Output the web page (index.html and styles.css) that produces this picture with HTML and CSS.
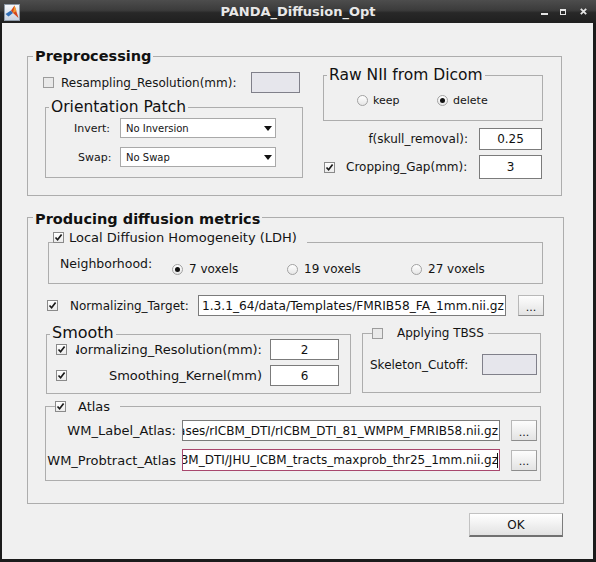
FILE: index.html
```html
<!DOCTYPE html>
<html>
<head>
<meta charset="utf-8">
<title>PANDA_Diffusion_Opt</title>
<link rel="stylesheet" href="styles.css">
</head>
<body>
<div class="window">
  <div class="titlebar">
    <div class="tb-left">
      <div class="appicon">
        <svg width="14" height="14" viewBox="0 0 14 14">
          <polygon points="0.5,9 6,5.5 8,8 3.5,11.5" fill="#2f6db5"/>
          <polygon points="6,5.5 9.5,0.5 13.5,13 8,8" fill="#d4461b"/>
          <polygon points="9.5,0.5 11.5,6 8,8" fill="#f29a2e"/>
        </svg>
      </div>
    </div>
    <div class="wtitle">PANDA_Diffusion_Opt</div>
    <div class="wctrls">
      <span class="wc-min"></span>
      <span class="wc-max"></span>
      <svg class="wc-close" width="7" height="7" viewBox="0 0 7 7"><path d="M0.8 0.8 L6.2 6.2 M6.2 0.8 L0.8 6.2" stroke="#e4e4e4" stroke-width="1.8"/></svg>
    </div>
  </div>

  <div class="client">
    <div class="group g-pre">
      <div class="gtitle bold">Preprocessing</div>
      <div class="pre-body">
        <div class="pre-left">
          <div class="row resamp-row">
            <span class="cb disabled"></span>
            <span class="lbl resamp-lbl">Resampling_Resolution(mm):</span>
            <span class="edit disabled resamp-edit"></span>
          </div>
          <div class="group g-orient">
            <div class="gtitle reg">Orientation Patch</div>
            <div class="row pop-row invert-row">
              <span class="plbl invert-lbl">Invert:</span>
              <div class="popup"><span>No Inversion</span><i class="arrow"></i></div>
            </div>
            <div class="row pop-row swap-row">
              <span class="plbl swap-lbl">Swap:</span>
              <div class="popup"><span>No Swap</span><i class="arrow"></i></div>
            </div>
          </div>
        </div>
        <div class="pre-right">
          <div class="group g-raw">
            <div class="gtitle reg raw-title">Raw NII from Dicom</div>
            <div class="row raw-radios">
              <span class="ritem keep-item"><span class="radio"></span><span>keep</span></span>
              <span class="ritem"><span class="radio on"></span><span>delete</span></span>
            </div>
          </div>
          <div class="row f-row">
            <span class="lbl f-lbl">f(skull_removal):</span>
            <span class="edit num f-edit">0.25</span>
          </div>
          <div class="row c-row">
            <span class="cb on c-cb"><svg width="9" height="9" viewBox="0 0 9 9"><path d="M1.5 4.5 L3.6 6.8 L7.6 1.6" fill="none" stroke="#1a1a1a" stroke-width="1.7"/></svg></span>
            <span class="lbl c-lbl">Cropping_Gap(mm):</span>
            <span class="edit num c-edit">3</span>
          </div>
        </div>
      </div>
    </div>

    <div class="group g-prod">
      <div class="gtitle bold prod-title">Producing diffusion metrics</div>
      <div class="group g-ldh">
        <div class="ctitle ldh-title">
          <span class="cb on"><svg width="9" height="9" viewBox="0 0 9 9"><path d="M1.5 4.5 L3.6 6.8 L7.6 1.6" fill="none" stroke="#1a1a1a" stroke-width="1.7"/></svg></span>
          <span>Local Diffusion Homogeneity (LDH)</span>
        </div>
        <div class="row nb-row">
          <span class="nb-lbl">Neighborhood:</span>
          <span class="ritem vox vox7"><span class="radio on"></span><span>7 voxels</span></span>
          <span class="ritem vox vox19"><span class="radio"></span><span>19 voxels</span></span>
          <span class="ritem vox"><span class="radio"></span><span>27 voxels</span></span>
        </div>
      </div>
      <div class="row nt-row">
        <span class="cb on"><svg width="9" height="9" viewBox="0 0 9 9"><path d="M1.5 4.5 L3.6 6.8 L7.6 1.6" fill="none" stroke="#1a1a1a" stroke-width="1.7"/></svg></span>
        <span class="lbl nt-lbl">Normalizing_Target:</span>
        <span class="edit path nt-edit"><span>1.3.1_64/data/Templates/FMRIB58_FA_1mm.nii.gz</span></span>
        <span class="btn3 nt-btn">...</span>
      </div>
      <div class="row sm-row">
        <div class="group g-smooth">
          <div class="gtitle reg smooth-title">Smooth</div>
          <div class="row s-row s-row1">
            <span class="cb on"><svg width="9" height="9" viewBox="0 0 9 9"><path d="M1.5 4.5 L3.6 6.8 L7.6 1.6" fill="none" stroke="#1a1a1a" stroke-width="1.7"/></svg></span>
            <span class="clip-lbl"><span>Normalizing_Resolution(mm):</span></span>
            <span class="edit num s-edit">2</span>
          </div>
          <div class="row s-row s-row2">
            <span class="cb on"><svg width="9" height="9" viewBox="0 0 9 9"><path d="M1.5 4.5 L3.6 6.8 L7.6 1.6" fill="none" stroke="#1a1a1a" stroke-width="1.7"/></svg></span>
            <span class="clip-lbl"><span>Smoothing_Kernel(mm)</span></span>
            <span class="edit num s-edit">6</span>
          </div>
        </div>
        <div class="group g-tbss">
          <div class="ctitle tbss-title">
            <span class="cb disabled"></span>
            <span>Applying TBSS</span>
          </div>
          <div class="row skel-row">
            <span class="lbl skel-lbl">Skeleton_Cutoff:</span>
            <span class="edit disabled skel-edit"></span>
          </div>
        </div>
      </div>
      <div class="group g-atlas">
        <div class="ctitle atlas-title">
          <span class="cb on"><svg width="9" height="9" viewBox="0 0 9 9"><path d="M1.5 4.5 L3.6 6.8 L7.6 1.6" fill="none" stroke="#1a1a1a" stroke-width="1.7"/></svg></span>
          <span>Atlas</span>
        </div>
        <div class="row a-row a-row1">
          <span class="lbl a-lbl">WM_Label_Atlas:</span>
          <span class="edit path a-edit"><span>ases/rICBM_DTI/rICBM_DTI_81_WMPM_FMRIB58.nii.gz</span></span>
          <span class="btn3 a-btn">...</span>
        </div>
        <div class="row a-row a-row2">
          <span class="lbl a-lbl">WM_Probtract_Atlas</span>
          <span class="edit path a-edit focus"><span>3M_DTI/JHU_ICBM_tracts_maxprob_thr25_1mm.nii.gz</span><i class="caret"></i></span>
          <span class="btn3 a-btn">...</span>
        </div>
      </div>
    </div>

    <div class="okbtn">OK</div>
  </div>
</div>
</body>
</html>
```
FILE: styles.css
```css
* { box-sizing: border-box; }
html, body { margin: 0; padding: 0; }
body {
  width: 596px; height: 562px; overflow: hidden;
  background: #1b1b1b;
  font-family: "DejaVu Sans", "Liberation Sans", sans-serif;
  font-size: 12px; color: #141414;
}
.window { width: 596px; height: 562px; background: #1b1b1b; display: flex; flex-direction: column; }

/* title bar */
.titlebar {
  height: 23px; flex: none;
  display: grid; grid-template-columns: 1fr auto 1fr; align-items: center;
  background: linear-gradient(#4d4d4d 0, #3b3b3b 45%, #282828 55%, #1f1f1f 100%);
  color: #e8e8e8;
}
.tb-left { display: flex; align-items: center; padding-left: 4px; }
.appicon {
  width: 16px; height: 17px; border: 1px solid #8e9aa8;
  background: linear-gradient(#f6f8fb, #c9d3e0);
  display: flex; align-items: center; justify-content: center;
  margin-top: 1px;
}
.wtitle { font-weight: bold; font-size: 13px; line-height: 23px; white-space: nowrap; }
.wctrls { justify-self: end; display: flex; align-items: center; padding-right: 9px; height: 23px; }
.wc-min { width: 7px; height: 2px; background: #e4e4e4; margin-top: 5px; }
.wc-max { width: 6px; height: 6px; border: 1px solid #e4e4e4; border-top-width: 2px; margin-left: 12px; }
.wc-close { margin-left: 14px; }

/* client */
.client {
  margin: 0 3px 0 2px; height: 536px; flex: none;
  background: #f0f0f0;
  display: flex; flex-direction: column; align-items: flex-start;
}

.group {
  border: 1px solid #adadad; flex: none;
  display: flex; flex-direction: column; align-items: flex-start;
}
.gtitle { background: #f0f0f0; padding: 0 2px; white-space: nowrap; color: #111; }
.gtitle.bold { font-weight: bold; font-size: 14.5px; line-height: 18px; margin-top: -10px; margin-bottom: -9px; margin-left: 5px; }
.gtitle.reg { font-size: 15.5px; line-height: 20px; margin-top: -11px; margin-bottom: -10px; margin-left: 3px; }

.row { display: flex; align-items: center; flex: none; }
.lbl { white-space: nowrap; flex: none; }

.cb {
  width: 11px; height: 11px; flex: none;
  border: 1px solid #8a8a8a;
  background: linear-gradient(#ffffff, #ebebeb);
  display: flex; align-items: center; justify-content: center;
}
.cb.disabled { border-color: #9c9c9c; background: #e9e9e9; }

.radio {
  width: 11px; height: 11px; border-radius: 50%; flex: none;
  border: 1px solid #a2a2a2;
  background: linear-gradient(#ffffff, #e6e6e6);
  display: flex; align-items: center; justify-content: center;
}
.radio.on::after { content: ""; width: 5px; height: 5px; border-radius: 50%; background: #111; }
.ritem { display: flex; align-items: center; gap: 5px; white-space: nowrap; }

.edit {
  background: #fff; border: 1px solid #7b7b7b;
  display: flex; align-items: center; overflow: hidden; white-space: nowrap;
  font-size: 12px; flex: none; color: #111;
}
.edit.num { justify-content: center; }
.edit.path { justify-content: flex-end; padding-right: 1px; }
.edit.path > span { flex: none; }
.edit.disabled { background: #e6e6ec; border-color: #80808a; }
.edit.focus { border-color: #a8476d; }
.caret { width: 1px; height: 15px; background: #111; flex: none; margin-left: -1px; }

.popup {
  width: 156px; height: 20px; background: #fff; border: 1px solid #a9a9a9;
  display: flex; align-items: center; justify-content: space-between;
  padding: 0 2px 0 5px; font-size: 10px; white-space: nowrap;
}
.arrow { width: 0; height: 0; border-left: 4px solid transparent; border-right: 4px solid transparent; border-top: 5px solid #111; margin-right: 1px; }

.btn3 {
  width: 26px; height: 21px; flex: none;
  border: 1px solid #b8b8b8; border-bottom-color: #8c8c8c; border-right-color: #9c9c9c;
  background: linear-gradient(#fdfdfd, #e3e3e3);
  display: flex; align-items: center; justify-content: center;
  font-size: 11px; padding-top: 3px;
}

/* Preprocessing */
.g-pre { margin-top: 33px; margin-left: 25px; width: 535px; height: 140px; }
.pre-body { display: flex; align-items: flex-start; margin-left: 15px; }
.pre-left { width: 260px; display: flex; flex-direction: column; align-items: flex-start; flex: none; }
.resamp-row { margin-top: 16px; height: 21px; }
.resamp-lbl { margin-left: 7px; width: 190px; }
.resamp-edit { width: 49px; height: 21px; }

.g-orient { margin-top: 14px; margin-left: 2px; width: 258px; height: 71px; }
.pop-row { height: 20px; }
.invert-row { margin-top: 11px; }
.swap-row { margin-top: 9px; }
.plbl { width: 74px; font-size: 11px; white-space: nowrap; }
.invert-lbl { padding-left: 28px; }
.swap-lbl { padding-left: 32px; }

.pre-right { margin-left: 20px; width: 220px; display: flex; flex-direction: column; align-items: flex-start; flex: none; }
.g-raw { margin-top: 19px; width: 220px; height: 46px; }
.raw-title { font-size: 16px; margin-left: 1px; }
.raw-radios { margin-top: 18px; height: 14px; padding-left: 33px; font-size: 11px; }
.keep-item { width: 80px; }
.f-row { margin-top: 7px; height: 22px; }
.f-lbl { width: 145px; text-align: right; }
.f-edit { margin-left: 11px; width: 63px; height: 22px; }
.c-row { margin-top: 5px; height: 24px; }
.c-cb { margin-left: 1px; }
.c-lbl { margin-left: 11px; width: 133px; }
.c-edit { width: 63px; height: 24px; }

/* Producing */
.g-prod { margin-top: 21px; margin-left: 25px; width: 537px; height: 287px; }
.gtitle.bold.prod-title { margin-top: -8px; margin-bottom: -11px; }
.g-ldh { margin-top: 25px; margin-left: 20px; width: 495px; height: 42px; }
.ctitle { display: flex; align-items: center; background: #f0f0f0; white-space: nowrap; height: 14px; flex: none; }
.ldh-title { margin-top: -13px; margin-bottom: -2px; margin-left: 4px; padding-right: 10px; gap: 5px; font-size: 13px; }
.nb-row { margin-top: 14px; margin-left: 11px; align-items: flex-start; }
.nb-lbl { width: 112px; font-size: 12.5px; line-height: 15px; white-space: nowrap; flex: none; }
.vox { margin-top: 6px; height: 14px; gap: 6px; font-size: 12px; flex: none; }
.vox7 { width: 115px; }
.vox19 { width: 124px; }

.nt-row { margin-top: 11px; margin-left: 19px; height: 21px; }
.nt-lbl { margin-left: 12px; width: 128px; }
.nt-edit { width: 308px; height: 21px; }
.nt-edit > span { font-size: 12.2px; }
.nt-btn { margin-left: 12px; }

.sm-row { margin-top: 17px; align-items: flex-start; }
.g-smooth { margin-top: 1px; margin-left: 18px; width: 305px; height: 60px; }
.gtitle.reg.smooth-title { font-size: 16px; margin-top: -12px; margin-bottom: -9px; margin-left: 3px; }
.s-row { height: 21px; margin-left: 9px; }
.s-row1 { margin-top: 5px; }
.s-row2 { margin-top: 5px; }
.clip-lbl { width: 186px; margin-left: 9px; overflow: hidden; display: flex; justify-content: flex-end; white-space: nowrap; font-size: 13px; flex: none; }
.clip-lbl > span { flex: none; }
.s-edit { margin-left: 8px; width: 69px; height: 21px; }

.g-tbss { margin-left: 11px; width: 179px; height: 60px; }
.tbss-title { margin-top: -8px; margin-bottom: -6px; margin-left: 9px; padding-right: 4px; gap: 14px; font-size: 12px; }
.skel-row { margin-top: 20px; margin-left: 7px; height: 21px; }
.skel-lbl { width: 112px; }
.skel-edit { width: 55px; height: 21px; }

.g-atlas { margin-top: 12px; margin-left: 17px; width: 496px; height: 75px; }
.atlas-title { margin-top: -8px; margin-bottom: -6px; margin-left: 9px; padding-right: 10px; gap: 12px; font-size: 13px; }
.a-row1 { margin-top: 13px; height: 21px; }
.a-row2 { margin-top: 8px; height: 22px; }
.a-lbl { width: 130px; text-align: right; font-size: 13px; }
.a-edit { margin-left: 6px; width: 318px; height: 21px; }
.a-row2 .a-edit { height: 22px; }
.a-btn { margin-left: 11px; }

.okbtn {
  margin-top: 9px; align-self: flex-end; margin-right: 30px;
  width: 94px; height: 24px;
  border: 1px solid #c2c2c2; border-right-color: #7c7c7c; border-bottom: 2px solid #707070;
  background: linear-gradient(#ffffff, #e2e2e2);
  display: flex; align-items: center; justify-content: center;
  font-size: 12px; color: #111;
}
```
